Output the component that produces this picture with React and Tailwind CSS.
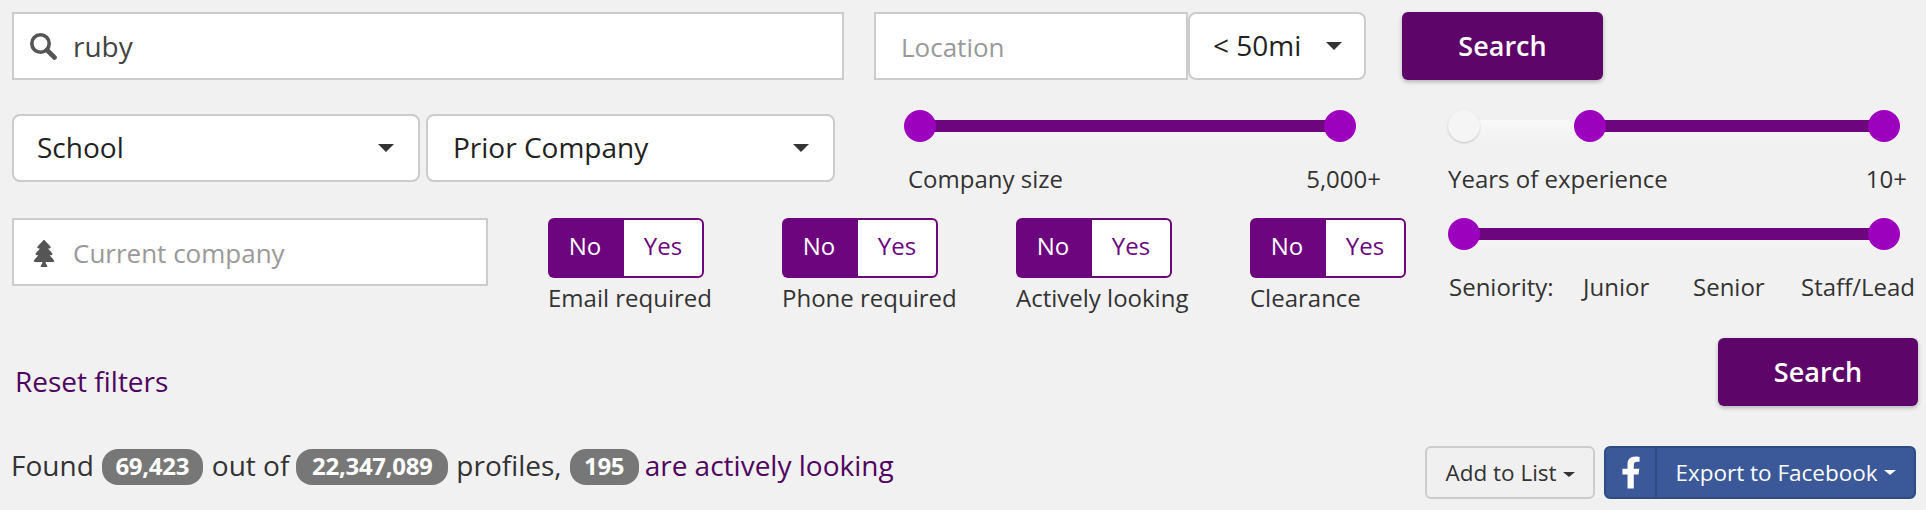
import React from "react";
import { FaTree, FaFacebookF } from "react-icons/fa";

// Caret used by the select boxes
function Caret() {
  return <span className="w-0 h-0 border-x-[8px] border-t-[8px] border-x-transparent border-t-[#333]" />;
}

function SmallCaret({ color }) {
  return <span className={`inline-block w-0 h-0 ml-[6px] align-middle border-x-[6px] border-t-[5px] border-x-transparent ${color}`} />;
}

function SearchIcon() {
  return (
    <svg viewBox="0 0 27 27" className="w-[27px] h-[27px] shrink-0" fill="none" stroke="#555">
      <circle cx="10.5" cy="10.5" r="8.7" strokeWidth="3.6" />
      <line x1="17" y1="17" x2="24.5" y2="24.5" strokeWidth="4.6" strokeLinecap="round" />
    </svg>
  );
}

function Select({ label, className }) {
  return (
    <div className={`h-[68px] bg-white border-2 border-[#ccc] rounded-[8px] flex items-center justify-between text-[#222] text-[28px] ${className}`}>
      <span className="pb-[3px]">{label}</span>
      <Caret />
    </div>
  );
}

function Slider({ off, className }) {
  return (
    <div className={`relative h-8 ${className}`}>
      {/* track */}
      <div className="absolute left-3 right-3 top-[10px] h-5 bg-gradient-to-b from-[#f9f9f9] to-[#f2f2f2]" />
      <div className={`absolute right-3 top-[10px] h-3 bg-[#6d057f] ${off ? "left-[141px]" : "left-3"}`} />
      {off ? (
        <>
          <div className="absolute left-0 top-0 w-8 h-8 rounded-full bg-[#f5f5f5] shadow-[0_1px_2px_rgba(0,0,0,0.2)]" />
          <div className="absolute left-[126px] top-0 w-8 h-8 rounded-full bg-[#9c02be]" />
        </>
      ) : (
        <div className="absolute left-0 top-0 w-8 h-8 rounded-full bg-[#9c02be]" />
      )}
      <div className="absolute right-0 top-0 w-8 h-8 rounded-full bg-[#9c02be]" />
    </div>
  );
}

function Toggle({ label, className }) {
  return (
    <div className={className}>
      <div className="flex h-[60px] text-[24px]">
        <div className="w-[74px] bg-[#6d057f] text-white rounded-l-[6px] flex items-center justify-center pb-1">No</div>
        <div className="w-[82px] bg-white text-[#6d057f] border-2 border-[#6d057f] rounded-r-[6px] flex items-center justify-center pb-1">Yes</div>
      </div>
      <div className="mt-[4px] text-[24px] leading-[32px] text-[#333] whitespace-nowrap">{label}</div>
    </div>
  );
}

function Badge({ children, className }) {
  return (
    <span className={`inline-flex items-center justify-center h-9 pb-[2px] rounded-[16px] bg-[#777] text-white text-[24px] font-bold tracking-[-0.3px] ${className}`}>
      {children}
    </span>
  );
}

export default function App() {
  return (
    <div className="w-[1926px] h-[510px] bg-[#f1f1f1] pl-3 pt-3 font-['Open_Sans',sans-serif] overflow-hidden">
      {/* Top search row */}
      <div className="flex h-[68px]">
        <div className="w-[832px] bg-white border-2 border-[#ccc] flex items-center pl-4 text-[#444] text-[28px]">
          <SearchIcon />
          <span className="ml-[16px]">ruby</span>
        </div>
        <div className="ml-[30px] w-[314px] bg-white border-2 border-[#ccc] flex items-center pl-[25px] pt-[2px] text-[#999] text-[26px]">Location</div>
        <Select label="< 50mi" className="w-[178px] pl-[23px] pr-[22px]" />
        <button className="ml-[36px] w-[201px] bg-[#5e0569] text-white text-[27px] font-semibold rounded-[6px] shadow-[0_2px_4px_rgba(0,0,0,0.25)]">Search</button>
      </div>

      {/* Selects and the first two sliders */}
      <div className="flex mt-[30px] h-[108px]">
        <div className="flex gap-[6px] mt-1">
          <Select label="School" className="w-[408px] pl-[23px] pr-[24px]" />
          <Select label="Prior Company" className="w-[409px] pl-[25px] pr-[24px]" />
        </div>
        <div className="ml-[69px] w-[477px]">
          <Slider className="w-[452px]" />
          <div className="flex justify-between pl-1 mt-[22px] text-[24px] leading-[30px] text-[#333]">
            <span>Company size</span>
            <span>5,000+</span>
          </div>
        </div>
        <div className="ml-[67px] w-[459px]">
          <Slider off className="w-[452px]" />
          <div className="flex justify-between mt-[22px] text-[24px] leading-[30px] text-[#333]">
            <span>Years of experience</span>
            <span>10+</span>
          </div>
        </div>
      </div>

      {/* Company input, toggles and seniority */}
      <div className="flex h-[120px]">
        <div className="w-[476px] h-[68px] bg-white border-2 border-[#ccc] flex items-center pl-[18px] pt-[2px] text-[#999] text-[26px]">
          <FaTree className="w-[24px] h-[27px] text-[#555]" />
          <span className="ml-[17px]">Current company</span>
        </div>
        <Toggle label="Email required" className="ml-[60px] w-[234px]" />
        <Toggle label="Phone required" className="w-[234px]" />
        <Toggle label="Actively looking" className="w-[234px]" />
        <Toggle label="Clearance" className="w-[198px]" />
        <div className="w-[462px]">
          <Slider className="w-[452px]" />
          <div className="mt-[22px] h-[30px] flex pl-[1px] text-[24px] leading-[30px] text-[#333] whitespace-nowrap">
            <span className="w-[134px] shrink-0">Seniority:</span>
            <span className="w-[110px] shrink-0">Junior</span>
            <span className="w-[108px] shrink-0">Senior</span>
            <span className="shrink-0">Staff/Lead</span>
          </div>
        </div>
      </div>

      {/* Reset and second search */}
      <div className="flex justify-between h-[68px] pl-[3px] pr-2">
        <a className="mt-[23px] text-[28px] leading-[40px] text-[#4f0560]">Reset filters</a>
        <button className="w-[200px] h-[68px] bg-[#5e0569] text-white text-[27px] font-semibold rounded-[6px] shadow-[0_2px_4px_rgba(0,0,0,0.25)]">Search</button>
      </div>

      {/* Result counts and export */}
      <div className="flex justify-between mt-[40px] h-[53px] pr-[10px]">
        <div className="flex items-center h-9 mt-[3px] -ml-[1px] text-[28px] text-[#333] whitespace-nowrap">
          <span className="pb-[5px]">Found</span>
          <Badge className="ml-[8px] w-[101px]">69,423</Badge>
          <span className="ml-[9px] pb-[5px]">out of</span>
          <Badge className="ml-[7px] w-[152px]">22,347,089</Badge>
          <span className="ml-[8px] pb-[5px]">profiles,</span>
          <Badge className="ml-[8px] w-[69px]">195</Badge>
          <a className="ml-[6px] pb-[5px] text-[#4f0560]">are actively looking</a>
        </div>
        <div className="flex gap-[9px] h-[53px] text-[22.5px]">
          <button className="w-[170px] bg-[#f0f0f0] border-2 border-[#ccc] rounded-[6px] text-[#333]">
            Add to List<SmallCaret color="border-t-[#333]" />
          </button>
          <button className="w-[312px] flex bg-[#3b5998] border-2 border-[#2f4b82] rounded-[6px] text-white">
            <span className="w-[51px] h-full flex items-center justify-center border-r-2 border-[#2f4b82]">
              <FaFacebookF className="w-[20px] h-[33px]" />
            </span>
            <span className="flex-1 h-full flex items-center justify-center">
              Export to Facebook<SmallCaret color="border-t-white" />
            </span>
          </button>
        </div>
      </div>
    </div>
  );
}
